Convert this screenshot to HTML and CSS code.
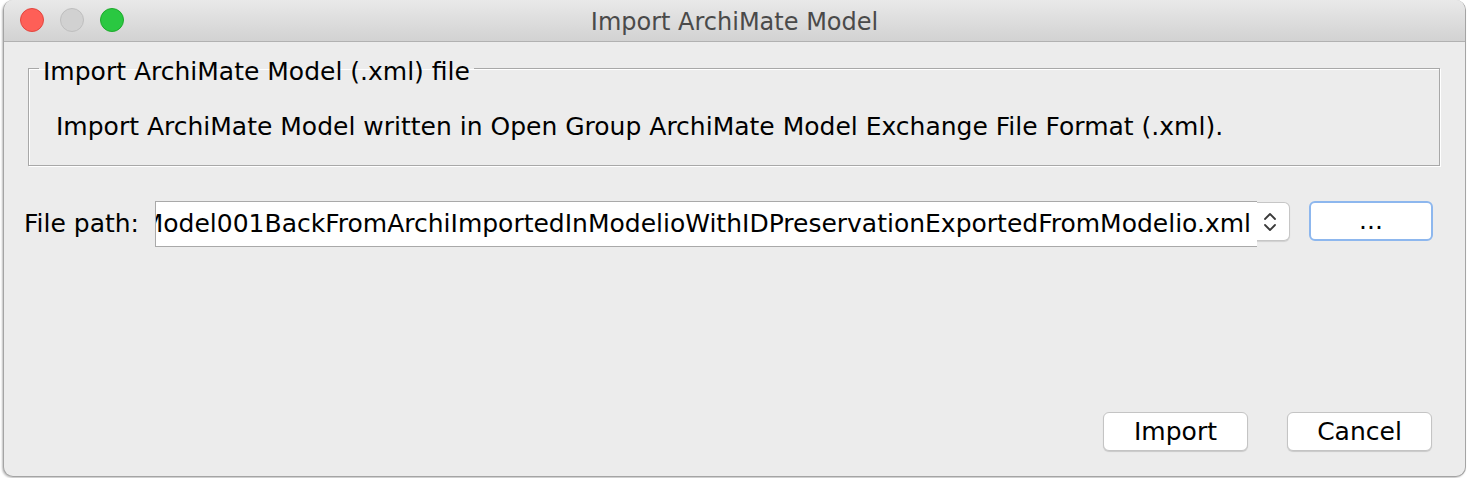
FILE: index.html
```html
<!DOCTYPE html>
<html>
<head>
<meta charset="utf-8">
<link rel="stylesheet" href="styles.css">
</head>
<body>
<div class="window">
  <div class="titlebar">
    <div class="lights">
      <span class="light red"></span>
      <span class="light gray"></span>
      <span class="light green"></span>
    </div>
    <div class="title">Import ArchiMate Model</div>
  </div>
  <div class="content">
    <fieldset class="group">
      <legend class="legend">Import ArchiMate Model (.xml) file</legend>
      <div class="desc">Import ArchiMate Model written in Open Group ArchiMate Model Exchange File Format (.xml).</div>
    </fieldset>
    <div class="pathrow">
      <label class="label">File path:</label>
      <div class="combo">
        <div class="field"><span class="fieldtext">Model001BackFromArchiImportedInModelioWithIDPreservationExportedFromModelio.xml</span></div>
        <div class="spinner">
          <svg width="16" height="20" viewBox="0 0 16 20"><path d="M3 7 L8 2 L13 7" fill="none" stroke="#3a3a3a" stroke-width="1.8" stroke-linecap="round" stroke-linejoin="round"/><path d="M3 13 L8 18 L13 13" fill="none" stroke="#3a3a3a" stroke-width="1.8" stroke-linecap="round" stroke-linejoin="round"/></svg>
        </div>
      </div>
      <button class="btn browse">...</button>
    </div>
    <div class="spacer"></div>
    <div class="actions">
      <button class="btn action">Import</button>
      <button class="btn action">Cancel</button>
    </div>
  </div>
</div>
</body>
</html>
```
FILE: styles.css
```css
html, body {
  margin: 0;
  padding: 0;
  background: #ffffff;
}
body {
  width: 1470px;
  height: 478px;
  overflow: hidden;
  font-family: "DejaVu Sans", sans-serif;
}
.window {
  margin-left: 3px;
  width: 1463px;
  height: 477px;
  box-sizing: border-box;
  border: 1px solid #a4a4a4;
  border-top: none;
  border-radius: 10px;
  background: #ececec;
  overflow: hidden;
  display: flex;
  flex-direction: column;
  box-shadow: -1px 1px 2px rgba(0,0,0,0.25);
}
.titlebar {
  height: 41px;
  flex: none;
  background: linear-gradient(#e9e9e9, #d2d2d2);
  border-bottom: 1px solid #b1b1b1;
  position: relative;
  display: flex;
  align-items: center;
  justify-content: center;
}
.lights {
  position: absolute;
  left: 16px;
  top: 8px;
  display: flex;
  gap: 16px;
}
.light {
  width: 24px;
  height: 24px;
  border-radius: 50%;
  box-sizing: border-box;
  display: block;
}
.red { background: #fe5f57; border: 1px solid #e2463f; }
.gray { background: #d1d1d1; border: 1px solid #bebebe; }
.green { background: #2ac841; border: 1px solid #1eaa2c; }
.title {
  font-size: 24px;
  color: #4a4a4a;
  margin-top: 2px;
}
.content {
  flex: 1;
  display: flex;
  flex-direction: column;
  padding: 7px 25px 25px 24px;
}
.group {
  margin: 0;
  padding: 0 0 23px 0;
  border: 1px solid #a8a8a8;
  box-shadow: 1px 1px 0 #ffffff, inset 1px 1px 0 #ffffff;
  min-width: 0;
}
.legend {
  padding: 8px 4px 0 4px;
  margin-left: 10px;
  font-size: 25px;
  line-height: 30px;
  color: #000;
}
.desc {
  font-size: 25px;
  line-height: 30px;
  color: #000;
  margin-top: 25px;
  padding-left: 27px;
}
.pathrow {
  display: flex;
  align-items: flex-start;
  margin-top: 35px;
  margin-left: -4px;
}
.label {
  font-size: 25px;
  line-height: 30px;
  margin-top: 8px;
  width: 131px;
  flex: none;
}
.combo {
  display: flex;
  position: relative;
  flex: none;
}
.field {
  width: 1102px;
  height: 46px;
  box-sizing: border-box;
  background: #fff;
  border: 1px solid #a9a9a9;
  border-right: none;
  display: flex;
  justify-content: flex-end;
  overflow: hidden;
  white-space: nowrap;
  font-size: 25px;
  line-height: 44px;
  padding-right: 6px;
  position: relative;
  z-index: 1;
}
.fieldtext { flex: none; }
.spinner {
  width: 34px;
  height: 39px;
  margin-top: 1px;
  margin-left: -1px;
  box-sizing: border-box;
  background: #fff;
  border: 1px solid #c6c6c6;
  border-left: none;
  border-radius: 0 6px 6px 0;
  box-shadow: 0 1px 1px rgba(0,0,0,0.12);
  display: flex;
  align-items: center;
  justify-content: center;
  padding-right: 6px;
}
.btn {
  font-family: "DejaVu Sans", sans-serif;
  font-size: 25px;
  color: #000;
  background: #fff;
  border: 1px solid #c4c4c4;
  border-radius: 6px;
  box-shadow: 0 1px 1px rgba(0,0,0,0.15);
  padding: 0;
  height: 39px;
  line-height: 36px;
}
.browse {
  width: 124px;
  height: 40px;
  margin-left: 19px;
  border: 2px solid #8db7ee;
  line-height: 30px;
  box-shadow: none;
}
.spacer { flex: 1; }
.actions {
  display: flex;
  justify-content: flex-end;
  gap: 39px;
  padding-right: 8px;
}
.action {
  width: 145px;
}
```
